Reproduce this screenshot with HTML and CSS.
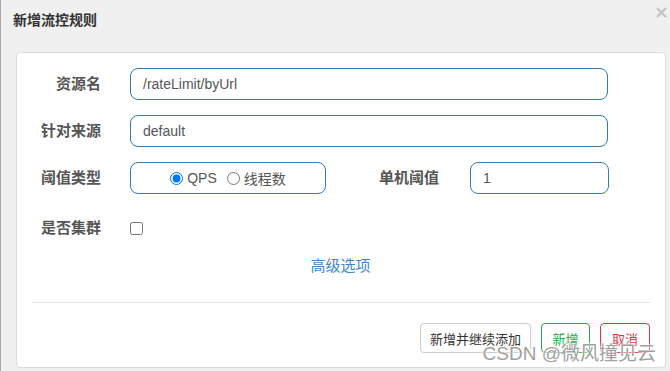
FILE: index.html
```html
<!DOCTYPE html>
<html>
    <head>
        <meta charset="UTF-8">
        <meta name="viewport" content="width=device-width, initial-scale=1.0">
        <title>新增流控规则</title>
        <link rel="stylesheet" href="styles.css">
    </head>
    <body>
        <div class="dialog">
            <div class="dialog-title">新增流控规则</div>
            <span class="close">
                <svg width="11" height="11" viewBox="0 0 11 11">
                    <path d="M1 1 L10 10 M10 1 L1 10" stroke="#c4c4c4" stroke-width="2.4" fill="none"/>
                </svg>
            </span>
            <div class="card">
                <div class="form-row">
                    <label class="label">资源名</label>
                    <input class="field wide" type="text" value="/rateLimit/byUrl">
                </div>
                <div class="form-row">
                    <label class="label">针对来源</label>
                    <input class="field wide" type="text" value="default">
                </div>
                <div class="form-row">
                    <label class="label">阈值类型</label>
                    <div class="radio-box">
                        <label class="radio"><input type="radio" name="grade" checked>QPS</label>
                        <label class="radio"><input type="radio" name="grade">线程数</label>
                    </div>
                    <label class="label label-2">单机阈值</label>
                    <input class="field small" type="text" value="1">
                </div>
                <div class="form-row check-row">
                    <label class="label">是否集群</label>
                    <input class="check" type="checkbox">
                </div>
                <div class="advanced"><a href="#">高级选项</a></div>
                <div class="divider"></div>
                <div class="buttons">
                    <button class="btn btn-more">新增并继续添加</button>
                    <button class="btn btn-ok">新增</button>
                    <button class="btn btn-cancel">取消</button>
                </div>
            </div>
            <div class="watermark">CSDN @微风撞见云</div>
        </div>
    </body>
</html>
```

FILE: styles.css
```css
body {
    margin: 0;
    background-color: #f0f0f0;
    font-family: "Liberation Sans", "Noto Sans CJK SC", sans-serif;
    color: #333;
}
.dialog {
    position: relative;
    height: 371px;
    border-left: 1px solid #a8a8a8;
    box-sizing: border-box;
    padding: 0 4px 0 15px;
}
.dialog-title {
    height: 52px;
    line-height: 40px;
    margin-left: -3px;
    font-size: 14px;
    font-weight: bold;
    color: #333;
}
.close {
    position: absolute;
    top: 4px;
    right: 3px;
}
.card {
    background-color: #fff;
    border: 1px solid #dcdcdc;
    border-radius: 4px;
    padding: 15px 15px 14px 0;
    height: 316px;
    box-sizing: border-box;
}
.form-row {
    display: flex;
    align-items: center;
    height: 32px;
    margin-bottom: 15px;
}
.label {
    width: 84px;
    margin-right: 29px;
    text-align: right;
    font-size: 15px;
    font-weight: bold;
    color: #555;
    line-height: 20px;
}
.label-2 {
    width: 113px;
    margin-right: 31px;
}
.field {
    height: 32px;
    box-sizing: border-box;
    border: 1px solid #337ab7;
    border-radius: 8px;
    padding: 0 12px;
    font-family: "Liberation Sans", "Noto Sans CJK SC", sans-serif;
    font-size: 14px;
    color: #555;
    outline: none;
}
.wide {
    width: 478px;
}
.small {
    width: 139px;
}
.radio-box {
    width: 196px;
    height: 32px;
    box-sizing: border-box;
    border: 1px solid #337ab7;
    border-radius: 8px;
    display: flex;
    align-items: center;
    justify-content: center;
    gap: 10px;
    font-size: 14px;
    color: #555;
}
.radio {
    display: flex;
    align-items: center;
}
.radio input {
    margin: 0 4px 0 0;
    width: 13px;
    height: 13px;
}
.check-row {
    margin-top: 18px;
    margin-bottom: 12px;
}
.check {
    margin: 0;
    width: 13px;
    height: 13px;
}
.advanced {
    text-align: center;
    line-height: 20px;
    font-size: 15px;
    padding-left: 14px;
}
.advanced a {
    color: #3a87cf;
    text-decoration: none;
}
.divider {
    margin: 26px 0 20px 15px;
    border-top: 1px solid #e2e2e2;
}
.buttons {
    display: flex;
    justify-content: flex-end;
    gap: 10px;
}
.btn {
    height: 30px;
    padding: 0 10px;
    background-color: #fff;
    border: 1px solid #ccc;
    border-radius: 4px;
    font-family: "Liberation Sans", "Noto Sans CJK SC", sans-serif;
    font-size: 13px;
    color: #333;
}
.btn-more {
    width: 111px;
    padding: 0;
}
.btn-ok {
    border-color: #28a745;
    color: #28a745;
    width: 49px;
}
.btn-cancel {
    border-color: #dc3545;
    color: #dc3545;
    width: 50px;
}
.watermark {
    position: absolute;
    right: 14px;
    bottom: 6px;
    font-size: 19px;
    color: #a0a0a0;
    text-shadow: 0 0 2px #fff, 0 0 2px #fff, 0 0 3px #fff;
    pointer-events: none;
}
```
